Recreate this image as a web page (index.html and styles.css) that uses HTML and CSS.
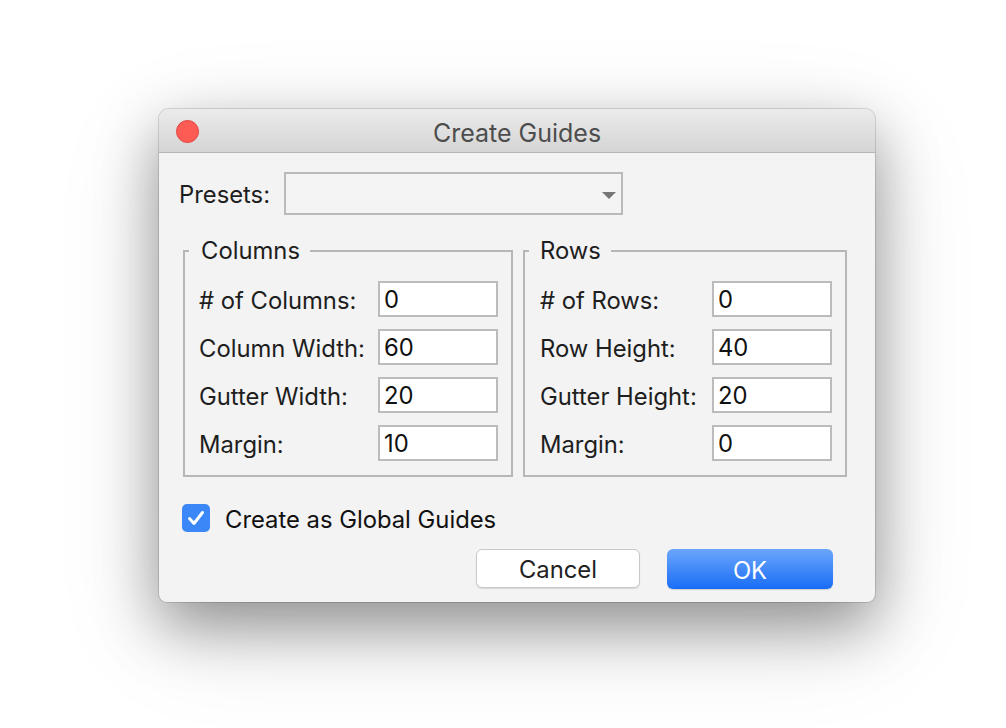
FILE: index.html
```html
<!DOCTYPE html>
<html>
<head>
<meta charset="utf-8">
<link rel="stylesheet" href="styles.css">
</head>
<body>
<div class="window">
  <div class="titlebar">
    <div class="tb-left"><span class="close"></span></div>
    <div class="title">Create Guides</div>
    <div class="tb-right"></div>
  </div>
  <div class="content">
    <div class="presets">
      <span class="presets-label">Presets:</span>
      <div class="dropdown">
        <svg class="caret" width="14" height="7" viewBox="0 0 14 7"><path d="M0 0H14L7 7Z" fill="#777"/></svg>
      </div>
    </div>
    <div class="groups">
      <fieldset class="group group-cols">
        <legend>Columns</legend>
        <div class="grid">
          <span class="lbl"># of Columns:</span><div class="field">0</div>
          <span class="lbl">Column Width:</span><div class="field">60</div>
          <span class="lbl">Gutter Width:</span><div class="field">20</div>
          <span class="lbl">Margin:</span><div class="field">10</div>
        </div>
      </fieldset>
      <fieldset class="group group-rows">
        <legend>Rows</legend>
        <div class="grid">
          <span class="lbl"># of Rows:</span><div class="field">0</div>
          <span class="lbl">Row Height:</span><div class="field">40</div>
          <span class="lbl">Gutter Height:</span><div class="field">20</div>
          <span class="lbl">Margin:</span><div class="field">0</div>
        </div>
      </fieldset>
    </div>
    <div class="check-row">
      <span class="checkbox">
        <svg width="28" height="28" viewBox="0 0 28 28"><path d="M7.5 14.5L12 19.5L20.5 8.5" fill="none" stroke="#fff" stroke-width="3" stroke-linecap="round" stroke-linejoin="round"/></svg>
      </span>
      <span class="check-label">Create as Global Guides</span>
    </div>
    <div class="buttons">
      <div class="btn btn-cancel">Cancel</div>
      <div class="btn btn-ok">OK</div>
    </div>
  </div>
</div>
</body>
</html>
```

FILE: styles.css
```css
* { box-sizing: border-box; }
html, body {
  margin: 0;
  background: #ffffff;
}
body {
  min-height: 728px;
  padding: 109px 0 0 159px;
  font-family: "Inter", "Liberation Sans", sans-serif;
  font-size: 23.8px;
  color: #1e1e1e;
}
.window {
  width: 716px;
  height: 493px;
  background: #f3f3f3;
  border-radius: 10px 10px 8px 8px;
  box-shadow: 0 0 0 1px rgba(0,0,0,0.13), 0 24px 60px rgba(0,0,0,0.38), 0 30px 110px rgba(0,0,0,0.12);
  overflow: hidden;
}
.titlebar {
  height: 44px;
  display: grid;
  grid-template-columns: 1fr auto 1fr;
  align-items: center;
  background: linear-gradient(#ebebeb, #d5d5d5);
  border-bottom: 1px solid #b5b5b5;
}
.tb-left {
  display: flex;
  align-items: center;
  padding-left: 17px;
  padding-top: 2px;
}
.close {
  width: 23px;
  height: 23px;
  border-radius: 50%;
  background: #fd5c55;
  border: 1px solid #e2463f;
}
.title {
  color: #4d4d4d;
  font-size: 25px;
  padding-top: 4px;
}
.content {
  padding: 19px 28px 0 20px;
  display: flex;
  flex-direction: column;
}
.presets {
  display: flex;
  align-items: center;
  height: 43px;
}
.presets-label {
  width: 105px;
  padding-top: 2px;
}
.dropdown {
  width: 339px;
  height: 43px;
  border: 2px solid #bababa;
  background: #f4f4f4;
  display: flex;
  align-items: center;
  justify-content: flex-end;
  padding-right: 5px;
  padding-top: 3px;
}
.groups {
  display: flex;
  gap: 10px;
  margin-top: 23px;
  margin-left: 4px;
}
.group {
  margin: 0;
  padding: 0 13px 14px 14px;
  border: 2px solid #b7b7b7;
  min-width: 0;
}
.group-cols { width: 330px; }
.group-rows { width: 324px; padding-left: 15px; }
.group legend {
  margin-left: -10px;
  padding: 0 10px 0 12px;
  line-height: 26px;
}
.group-rows legend { margin-left: -11px; padding-left: 11px; }
.grid {
  display: grid;
  grid-template-columns: 1fr 120px;
  row-gap: 12px;
  align-items: center;
  padding-top: 17px;
}
.lbl { padding-top: 2px; white-space: nowrap; }
.field {
  height: 36px;
  border: 2px solid #bcbcbc;
  background: #ffffff;
  padding: 3px 0 0 4px;
  line-height: 28px;
  color: #111;
}
.check-row {
  display: flex;
  align-items: center;
  margin-top: 27px;
  margin-left: 3px;
  height: 28px;
}
.checkbox {
  width: 28px;
  height: 28px;
  border-radius: 5px;
  background: #3b87f7;
  display: flex;
}
.check-label {
  margin-left: 15px;
  padding-top: 2px;
  color: #111;
}
.buttons {
  display: flex;
  justify-content: flex-end;
  gap: 27px;
  margin-top: 17px;
  padding-right: 14px;
}
.btn {
  height: 40px;
  border-radius: 6px;
  display: flex;
  align-items: center;
  justify-content: center;
  padding-top: 2px;
}
.btn-cancel {
  width: 164px;
  height: 39px;
  background: #ffffff;
  border: 1px solid #c9c9c9;
  box-shadow: 0 1px 1px rgba(0,0,0,0.12);
  color: #222;
}
.btn-ok {
  width: 166px;
  background: linear-gradient(#6ba6fa, #1a6df7);
  color: #ffffff;
  box-shadow: 0 1px 1px rgba(0,0,0,0.15);
}
```
